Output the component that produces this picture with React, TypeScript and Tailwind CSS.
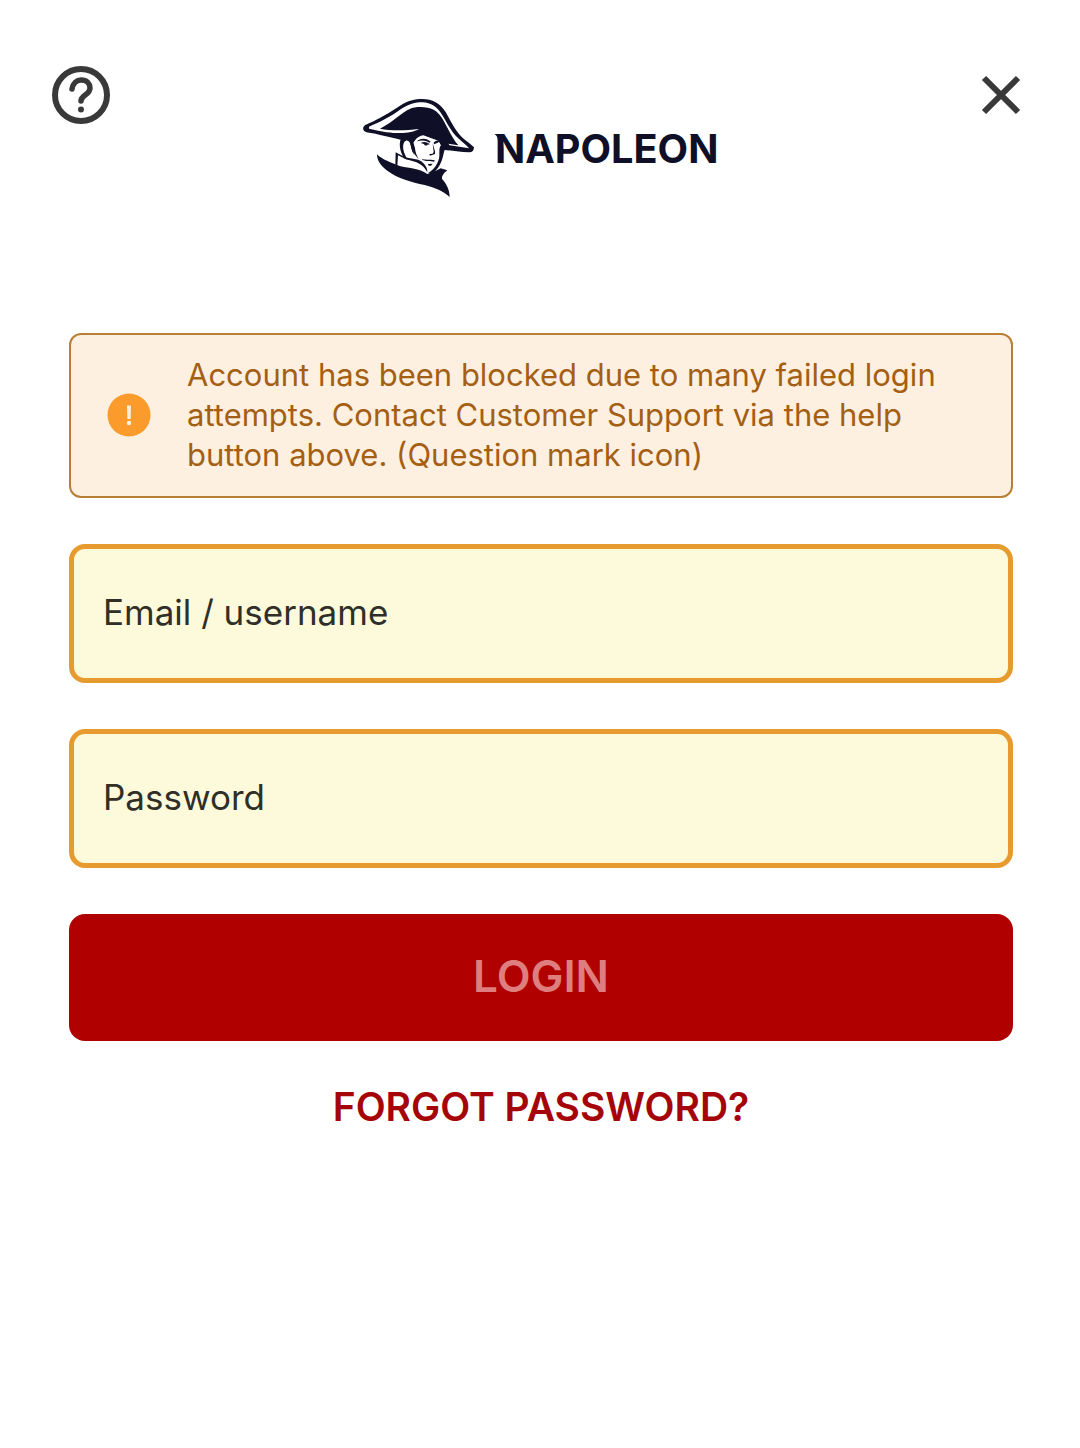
import React, { useState } from "react";

function Logo() {
  return (
    <svg viewBox="0 0 1110 345" className="h-[115px] w-[370px]" role="img" aria-label="Napoleon">
      <g fill="#0f1027">
        <path d="M25 112C27 106 33 104 42 100C70 87 105 68 135 47C158 32 180 27 202 27C232 27 255 40 272 66C287 92 298 118 320 141C334 153 348 163 357 172C357 181 352 187 343 187C318 186 292 182 268 180L250 152L205 136L140 150C110 144 70 132 34 127C26 124 23 119 25 112Z" />
        <path
          fill="#fff"
          d="M42 110C75 97 110 78 137 58C160 42 182 37 202 37C228 38 246 50 261 74C276 98 288 124 310 145C322 156 334 165 342 175L284 166L280 161L310 166C297 152 288 134 278 115C266 92 256 70 236 59C216 49 182 49 164 57C140 67 118 94 75 116C105 122 150 122 192 117C165 131 125 136 42 116Z"
        />
        <path d="M140 142C130 158 134 184 147 205L158 209C146 190 140 169 148 156C154 148 160 151 165 158C169 171 170 184 177 194C173 178 178 167 174 157C180 148 190 140 198 137L150 136Z" />
        <path d="M160 151C170 161 167 180 178 192L191 208C185 196 180 184 180 174L175 158L184 144L164 139Z" />
        <path d="M187 152C199 143 216 144 227 155L223 158C212 150 199 150 187 154Z" />
        <path d="M197 159C207 153 218 156 225 163L217 164C216 168 209 168 207 162Z" />
        <path d="M236 158C242 151 250 150 254 154L248 158L237 163Z" />
        <path d="M233 160L240 184L240 192L225 197L223 192L233 191L236 186Z" />
        <path d="M202 207C215 211 225 207 239 211L238 215C224 213 214 215 202 210Z" />
        <path d="M219 222L233 221L228 227L221 227Z" />
        <path d="M248 145L276 172C267 177 267 190 264 199C260 218 249 237 237 248L218 250C238 240 252 216 253 199C254 188 251 174 258 166Z" />
        <path d="M122 187L150 202L190 209C205 215 218 230 217 247L209 235C196 217 176 215 153 208L129 196L127 227L121 225Z" />
        <path d="M66 193C82 209 107 218 137 229C164 235 191 235 217 252L237 245L257 235L277 241C268 248 260 257 261 266C272 279 284 296 284 321C263 301 237 293 209 285C169 276 129 266 97 242C76 228 66 210 66 193Z" />
        <path d="M418 132H440V152H429C429 144 426 137 418 132Z" />
        <path d="M1004 132H1026V152H1015C1015 144 1012 137 1004 132Z" />
        <text x="420" y="218" fontSize="119" fontWeight="700" fontFamily="Inter, sans-serif">
          NAPOLEON
        </text>
      </g>
    </svg>
  );
}

function Field({ id, label, type }: { id: string; label: string; type: string }) {
  const [value, setValue] = useState("");
  return (
    <input
      id={id}
      type={type}
      value={value}
      placeholder={label}
      aria-label={label}
      onChange={(e) => setValue(e.target.value)}
      className="block h-[139px] w-full rounded-2xl border-[5px] border-[#e79b2f] bg-[#fdfadb] px-[29px] pb-1 text-[35px] text-[#2f2f28] outline-none placeholder:text-[#2f2f28] placeholder:opacity-100"
    />
  );
}

export default function App() {
  return (
    <div className="min-h-screen bg-white font-['Inter',sans-serif]">
      <header className="flex items-start justify-between px-[50px] pt-16">
        <button type="button" aria-label="Help" className="size-[62px]">
          <svg viewBox="0 0 62 62" fill="none" stroke="#39393a" className="size-full">
            <circle cx="31" cy="31" r="26" strokeWidth="6" />
            <path d="M22 25C23 19 27 16 31 16C37 16 40 20 40 24C40 31 31 31 31 37" strokeWidth="5.500" strokeLinecap="round" />
            <circle cx="31" cy="45.500" r="3" fill="#39393a" stroke="none" />
          </svg>
        </button>
        <div className="pt-[26px]">
          <Logo />
        </div>
        <button type="button" aria-label="Close" className="size-[62px]">
          <svg viewBox="0 0 62 62" fill="none" stroke="#39393a" strokeWidth="6" className="size-full">
            <path d="M16 14L50 48M50 14L16 48" />
          </svg>
        </button>
      </header>

      <main className="flex flex-col gap-[46px] pr-[67px] pl-[69px] pt-32">
        <div role="alert" className="flex items-center rounded-xl border-2 border-[#b97f35] bg-[#fdf0e0] pt-5 pr-8 pb-[21px] pl-9">
          <svg viewBox="0 0 44 44" className="size-11 shrink-0" aria-hidden="true">
            <circle cx="22" cy="22" r="21.500" fill="#fb9b2b" />
            <path d="M20 12.500H24L23.600 26H20.400Z" fill="#fdf0e0" />
            <circle cx="22" cy="30" r="2.200" fill="#fdf0e0" />
          </svg>
          <p className="ml-9 text-[31px] leading-10 text-[#a55f13]">
            Account has been blocked due to many failed login
            <br />
            attempts. Contact Customer Support via the help
            <br />
            button above. (Question mark icon)
          </p>
        </div>

        <form className="flex flex-col gap-[46px]" onSubmit={(e) => e.preventDefault()}>
          <Field id="username" label="Email / username" type="text" />
          <Field id="password" label="Password" type="password" />
          <button type="submit" disabled className="h-[127px] w-full rounded-2xl bg-[#b00000] pb-1 text-[44px] font-semibold text-[#de7e7e]">
            LOGIN
          </button>
        </form>

        <a href="#forgot" className="-mt-2 self-center text-[39px] leading-[56px] font-semibold text-[#a50508]">
          FORGOT PASSWORD?
        </a>
      </main>
    </div>
  );
}
